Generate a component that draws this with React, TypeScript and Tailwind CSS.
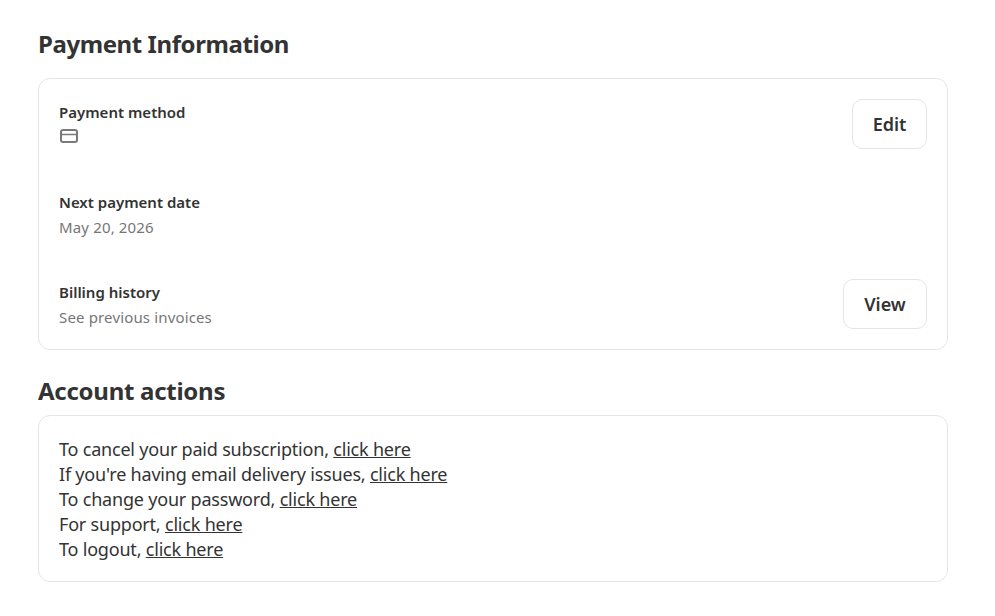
const LINKS = [
	"To cancel your paid subscription,",
	"If you're having email delivery issues,",
	"To change your password,",
	"For support,",
	"To logout,",
]

function CardIcon() {
	return (
		<svg className="mt-[1px]" width="20" height="20" viewBox="0 0 20 20" fill="none" stroke="#7a7a7a" strokeWidth="2">
			<rect x="2" y="4" width="16" height="12" rx="2" />
			<path d="M2 8.5h16" strokeWidth="1.5" />
		</svg>
	)
}

export default function App() {
	return (
		<div className="w-[995px] h-[616px] bg-white pl-[38px] pr-[47px] pt-[27px] font-['Noto_Sans',sans-serif] text-[#333333] overflow-hidden">
			<h2 className="text-[24px] leading-[33px] font-bold tracking-[-0.42px] mb-[18px]">Payment Information</h2>
			<div className="border border-[#e5e5e5] rounded-[12px] h-[272px] pl-5 pr-5 pt-[21px] flex flex-col">
				<div className="flex justify-between h-[90px]">
					<div>
						<div className="text-[15px] leading-[25px] font-semibold">Payment method</div>
						<CardIcon />
					</div>
					<button className="h-[50px] w-[75px] -mt-px border border-[#e5e5e5] rounded-[10px] text-[18px] font-semibold">Edit</button>
				</div>
				<div className="h-[90px]">
					<div className="text-[15px] leading-[25px] font-semibold">Next payment date</div>
					<div className="text-[15px] leading-[25px] tracking-[0.15px] text-[#767676]">May 20, 2026</div>
				</div>
				<div className="flex justify-between">
					<div>
						<div className="text-[15px] leading-[25px] font-semibold">Billing history</div>
						<div className="text-[15px] leading-[25px] tracking-[0.15px] text-[#767676]">See previous invoices</div>
					</div>
					<button className="h-[50px] w-[84px] -mt-px border border-[#e5e5e5] rounded-[10px] text-[18px] font-semibold">View</button>
				</div>
			</div>
			<h2 className="text-[24px] leading-[33px] font-bold tracking-[-0.27px] mt-[24px] mb-[8px]">Account actions</h2>
			<div className="border border-[#e5e5e5] rounded-[12px] pl-5 pt-[21px] pb-[19px] text-[18px] leading-[25px] tracking-[-0.2px]">
				{LINKS.map(t => (
					<div key={t}>
						{t} <a className="underline">click here</a>
					</div>
				))}
			</div>
		</div>
	)
}
